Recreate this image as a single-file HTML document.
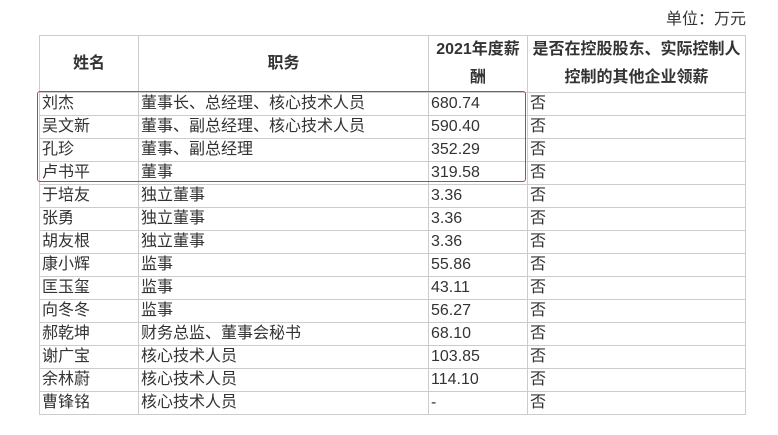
<!DOCTYPE html>
<html><head><meta charset="utf-8"><style>
body{margin:0;width:778px;height:435px;background:#fff;overflow:hidden;font-family:"Liberation Sans","Noto Sans CJK SC",sans-serif;color:#333;font-size:16px;position:relative}
.unit{position:absolute;right:32px;top:9px;font-size:16px;line-height:22px}
table{position:absolute;left:39px;top:35px;border-collapse:collapse;table-layout:fixed}
td{border:1px solid #ccc;padding:0 0 0 2px;height:22px;line-height:22px;white-space:nowrap;overflow:hidden;font-size:16px}
th{border:1px solid #ccc;font-weight:bold;font-size:16px;line-height:28px;height:56px;padding:0;white-space:nowrap;overflow:hidden}
.box{position:absolute;left:37px;top:91px;width:487px;height:89px;border:1px solid #c8403c;border-radius:3px}
</style></head><body>
<div class="unit">单位：万元</div>
<table>
<colgroup><col style="width:99px"><col style="width:290px"><col style="width:99px"><col style="width:218px"></colgroup>
<tr><th>姓名</th><th>职务</th><th>2021年度薪<br>酬</th><th>是否在控股股东、实际控制人<br>控制的其他企业领薪</th></tr>
<tr><td>刘杰</td><td>董事长、总经理、核心技术人员</td><td>680.74</td><td>否</td></tr>
<tr><td>吴文新</td><td>董事、副总经理、核心技术人员</td><td>590.40</td><td>否</td></tr>
<tr><td>孔珍</td><td>董事、副总经理</td><td>352.29</td><td>否</td></tr>
<tr><td>卢书平</td><td>董事</td><td>319.58</td><td>否</td></tr>
<tr><td>于培友</td><td>独立董事</td><td>3.36</td><td>否</td></tr>
<tr><td>张勇</td><td>独立董事</td><td>3.36</td><td>否</td></tr>
<tr><td>胡友根</td><td>独立董事</td><td>3.36</td><td>否</td></tr>
<tr><td>康小辉</td><td>监事</td><td>55.86</td><td>否</td></tr>
<tr><td>匡玉玺</td><td>监事</td><td>43.11</td><td>否</td></tr>
<tr><td>向冬冬</td><td>监事</td><td>56.27</td><td>否</td></tr>
<tr><td>郝乾坤</td><td>财务总监、董事会秘书</td><td>68.10</td><td>否</td></tr>
<tr><td>谢广宝</td><td>核心技术人员</td><td>103.85</td><td>否</td></tr>
<tr><td>余林蔚</td><td>核心技术人员</td><td>114.10</td><td>否</td></tr>
<tr><td>曹锋铭</td><td>核心技术人员</td><td>-</td><td>否</td></tr>
</table>
<div class="box"></div>
</body></html>
